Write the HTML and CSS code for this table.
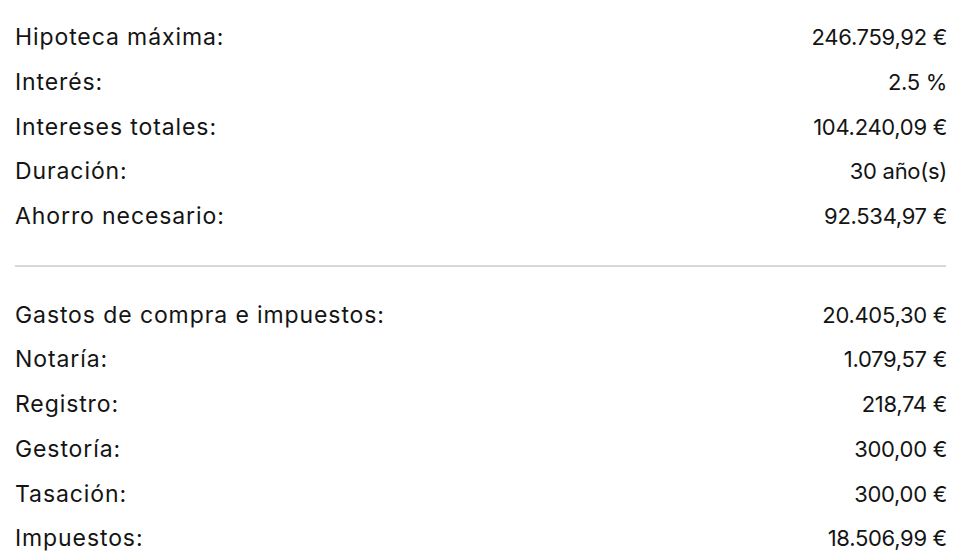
FILE: index.html
```html
<!DOCTYPE html>
<html lang="es">
<head>
<meta charset="utf-8">
<link rel="stylesheet" href="styles.css">
</head>
<body>
<div class="summary">
  <div class="group">
    <div class="row"><span class="label">Hipoteca máxima:</span><span class="value">246.759,92 €</span></div>
    <div class="row"><span class="label">Interés:</span><span class="value">2.5 %</span></div>
    <div class="row"><span class="label">Intereses totales:</span><span class="value">104.240,09 €</span></div>
    <div class="row"><span class="label">Duración:</span><span class="value">30 año(s)</span></div>
    <div class="row"><span class="label">Ahorro necesario:</span><span class="value">92.534,97 €</span></div>
  </div>
  <hr class="divider">
  <div class="group">
    <div class="row"><span class="label">Gastos de compra e impuestos:</span><span class="value">20.405,30 €</span></div>
    <div class="row"><span class="label">Notaría:</span><span class="value">1.079,57 €</span></div>
    <div class="row"><span class="label">Registro:</span><span class="value">218,74 €</span></div>
    <div class="row"><span class="label">Gestoría:</span><span class="value">300,00 €</span></div>
    <div class="row"><span class="label">Tasación:</span><span class="value">300,00 €</span></div>
    <div class="row"><span class="label">Impuestos:</span><span class="value">18.506,99 €</span></div>
  </div>
</div>
</body>
</html>
```
FILE: styles.css
```css
html, body {
  margin: 0;
  padding: 0;
  background: #fff;
}
.summary {
  width: 931px;
  padding: 15px 0 0 15px;
  font-family: Inter, "Liberation Sans", sans-serif;
  font-size: 22px;
  color: #141414;
}
.row {
  display: flex;
  justify-content: space-between;
  align-items: center;
  height: 44.7px;
}
.label {
  font-size: 23px;
  letter-spacing: 0.9px;
}
.value {
  letter-spacing: -0.3px;
  margin-right: -1px;
}
.divider {
  border: 0;
  height: 2px;
  background: #d8d8d8;
  margin: 27px 0 25px;
}
```
